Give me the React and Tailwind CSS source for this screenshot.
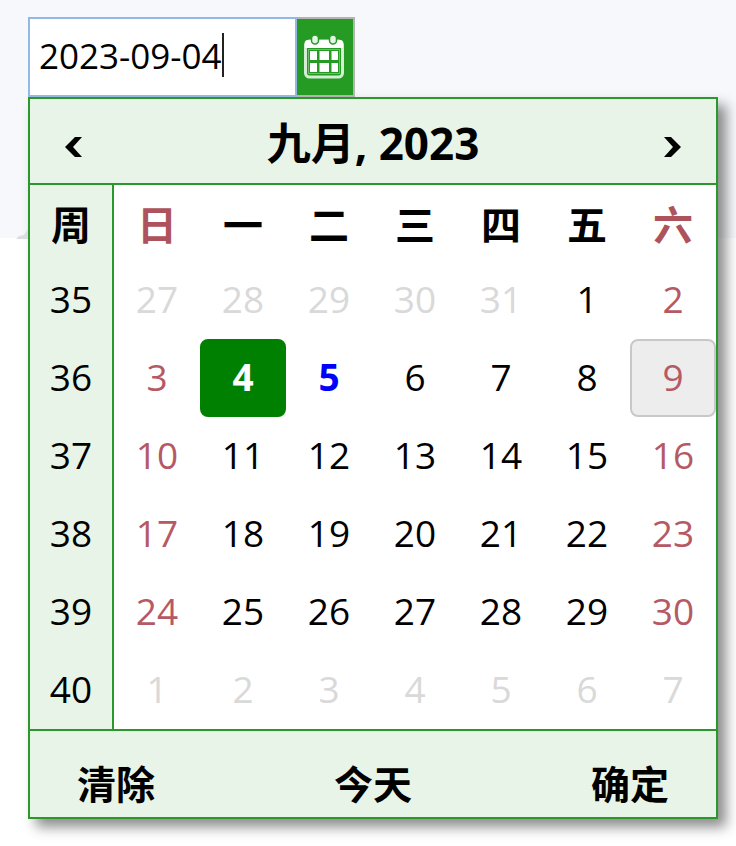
import { clsx } from 'clsx'

const weekDays = ['日', '一', '二', '三', '四', '五', '六']

const weeks = [
  { week: 35, days: [27, 28, 29, 30, 31, 1, 2] },
  { week: 36, days: [3, 4, 5, 6, 7, 8, 9] },
  { week: 37, days: [10, 11, 12, 13, 14, 15, 16] },
  { week: 38, days: [17, 18, 19, 20, 21, 22, 23] },
  { week: 39, days: [24, 25, 26, 27, 28, 29, 30] },
  { week: 40, days: [1, 2, 3, 4, 5, 6, 7] },
]

const SELECTED = 4
const TODAY = 5
const HOVERED = 9

const isWeekend = (col) => col === 0 || col === 6

// Leading days of the first row and trailing days of the last row
const isOutside = (row, day) => (row === 0 && day > 7) || (row === weeks.length - 1 && day < 8)

const CalendarIcon = () => (
  <svg viewBox="0 0 42 44" className="w-[42px] h-11" aria-hidden="true">
    <rect x="2.5" y="6" width="37" height="36" rx="4" fill="#259b24" stroke="#d3eed3" strokeWidth="3" />
    <path d="M2 13V8a3 3 0 0 1 3-3h32a3 3 0 0 1 3 3v5z" fill="#fff" />
    <rect x="8.5" y="0" width="7" height="9" rx="3.5" fill="#e4f5e4" stroke="#259b24" strokeWidth="1.5" />
    <rect x="26.5" y="0" width="7" height="9" rx="3.5" fill="#e4f5e4" stroke="#259b24" strokeWidth="1.5" />
    <rect x="5.5" y="14.5" width="31" height="24" fill="none" stroke="#6fbd6f" strokeWidth="1" />
    <path
      d="M7 16h7v9h-7zM16.5 16h9.5v9h-9.5zM28.5 16h6.5v9h-6.5zM7 28h7v9h-7zM16.5 28h9.5v9h-9.5zM28.5 28h6.5v9h-6.5z"
      fill="#fff"
    />
  </svg>
)

const Chevron = ({ direction }) => (
  <svg viewBox="0 0 17 20" className="w-[17px] h-5" aria-hidden="true">
    <path
      d={direction === 'left' ? 'M10 0H17L8 10L17 20H10L0 10z' : 'M7 0H0L9 10L0 20H7L17 10z'}
      fill="currentColor"
    />
  </svg>
)

const DateField = () => (
  <div className="flex h-20">
    <div className="relative">
      <input
        type="text"
        aria-label="日期"
        defaultValue="2023-09-04"
        className="w-[269px] h-full border-2 border-[#93b8e3] bg-white pl-[9px] pb-1 text-[35px] text-black outline-none"
      />
      {/* Text cursor */}
      <span className="absolute left-[194px] top-4 w-0.5 h-11 bg-[#222]" />
    </div>
    <button
      type="button"
      aria-label="打开日历"
      className="w-[58px] flex items-center justify-center border-2 border-l-0 border-[#b3b3b3] bg-[#259b24] pr-0.5"
    >
      <CalendarIcon />
    </button>
  </div>
)

const DayCell = ({ row, col, day }) => {
  const outside = isOutside(row, day)
  const current = !outside
  const selected = current && day === SELECTED
  const today = current && day === TODAY
  const hovered = current && day === HOVERED

  return (
    <td className="p-0">
      <button
        type="button"
        className={clsx(
          'w-full h-[78px] flex items-center justify-center rounded-lg border-2 pb-1 leading-none',
          selected && 'bg-[#008000] border-[#008000] text-white font-bold',
          today && 'border-transparent text-[#0000ff] font-bold',
          hovered && 'bg-[#ededed] border-[#c8c8c8] text-[#b55a64]',
          outside && 'border-transparent text-[#d9d9d9]',
          current && !selected && !today && !hovered && 'border-transparent',
          current && !selected && !today && !hovered && isWeekend(col) && 'text-[#b55a64]'
        )}
      >
        {day}
      </button>
    </td>
  )
}

const Calendar = () => (
  <div className="border-2 border-[#2a982a] bg-white text-black shadow-[8px_8px_12px_rgba(0,0,0,0.45)]">
    {/* Month navigation */}
    <div className="h-[86px] flex items-center justify-between border-b-2 border-[#2a982a] bg-[#e8f4e8] text-[44px] font-bold">
      <button type="button" aria-label="上个月" className="w-[86px] h-full flex items-center justify-center pt-3">
        <Chevron direction="left" />
      </button>
      <h2 className="pt-1">九月, 2023</h2>
      <button type="button" aria-label="下个月" className="w-[86px] h-full flex items-center justify-center pt-3">
        <Chevron direction="right" />
      </button>
    </div>

    <table className="w-full table-fixed border-separate border-spacing-0 text-center text-[37px]">
      <thead>
        <tr className="h-[76px] text-[40px]">
          <th className="w-[84px] p-0 pt-1 border-r-2 border-[#2a982a] bg-[#e8f4e8] leading-none">周</th>
          {weekDays.map((name, col) => (
            <th key={name} className={clsx('p-0 pt-1 leading-none', isWeekend(col) && 'text-[#ae535b]')}>
              {name}
            </th>
          ))}
        </tr>
      </thead>
      <tbody>
        {weeks.map(({ week, days }, row) => (
          <tr key={week}>
            <th className="p-0 pb-1 border-r-2 border-[#2a982a] bg-[#e8f4e8] font-normal leading-none">{week}</th>
            {days.map((day, col) => (
              <DayCell key={col} row={row} col={col} day={day} />
            ))}
          </tr>
        ))}
      </tbody>
    </table>

    {/* Actions */}
    <div className="h-[88px] flex items-center justify-between border-t-2 border-[#2a982a] bg-[#e8f4e8] px-[47px] pt-5 text-[39px] font-bold">
      <button type="button">清除</button>
      <button type="button">今天</button>
      <button type="button">确定</button>
    </div>
  </div>
)

const App = () => (
  <div className="relative min-h-screen bg-[linear-gradient(#f6f8fb_238px,#fff_238px)] pt-[17px] pl-7 pr-[18px] pb-7 font-['Open_Sans','Noto_Sans_CJK_SC',sans-serif]">
    {/* Corner of the panel behind the calendar */}
    <svg viewBox="0 0 12 12" className="absolute left-4 top-[227px] w-3 h-3" aria-hidden="true">
      <path d="M0 12L3 9L8 8L12 2V12z" fill="#dcdddf" />
    </svg>
    <DateField />
    <Calendar />
  </div>
)

export default App
